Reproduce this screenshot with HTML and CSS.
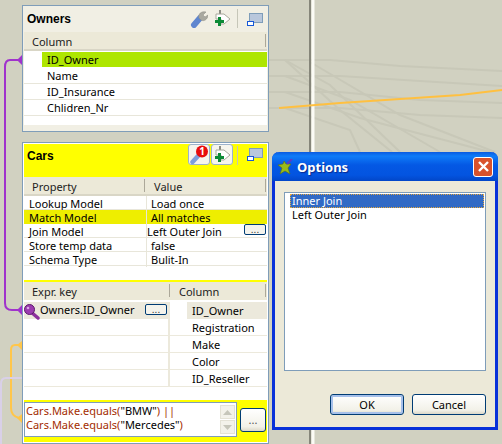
FILE: index.html
```html
<!DOCTYPE html>
<html lang="en">

<head>
    <meta charset="UTF-8" />
    <title>Map Editor</title>
    <link rel="stylesheet" href="styles.css">
</head>

<body>
    <div class="canvas">

        <svg class="links" width="502" height="444" viewBox="0 0 502 444" fill="none">
            <g stroke="#c8c8b8" stroke-width="2">
                <path d="M269 60H330L400 66L502 71" />
                <path d="M269 76H340L420 81L502 86" />
                <path d="M269 92H340L420 100L502 103" />
                <path d="M269 108H340L420 115L502 118" />
                <path d="M285 60L330 85L400 152" />
                <path d="M285 76L350 100L440 152" />
                <path d="M285 60L340 110L392 152" />
                <path d="M285 92L360 118L490 152" />
                <path d="M285 108L350 130L360 152" />
                <path d="M310 62L400 115L495 152" />
            </g>
            <path d="M310 0V152" stroke="#86867a" stroke-width="2" />
            <path d="M313 0V152" stroke="#fbfbf5" stroke-width="3" />
            <path d="M310 430V444" stroke="#86867a" stroke-width="2" />
            <path d="M313 430V444" stroke="#fbfbf5" stroke-width="3" />
            <path d="M279 108L340 103L400 99L460 95L502 90" stroke="#ffc040" stroke-width="2" />
            <path d="M21 345H15Q11 345 11 350V408Q11 416 19 418" stroke="#ffc64a" stroke-width="2" />
            <path d="M22 341V350L17 345Z M22 414V423L17 418Z" fill="#ffc64a" />
            <path d="M22 378H6Q1 378 1 384V444" stroke="#d9d0e8" stroke-width="2" />
            <path d="M20 60H10Q5 60 5 67V303Q5 310 12 310H20" stroke="#a033cc" stroke-width="2" />
            <path d="M22 55V65L17 60Z M22 305V315L17 310Z" fill="#a033cc" />
        </svg>

        <div class="panel panel-owners">
            <div class="panel-title">
                <b>Owners</b>
                <div class="title-tools">
                    <span class="tool">
                        <svg width="18" height="18" viewBox="0 0 18 18">
                            <path d="M4 15L10 8" stroke="#5f86cf" stroke-width="6" stroke-linecap="round" />
                            <path d="M9 8C8 4 11 1 16 2L13 5L15 7L18 5C18 9 14 12 11 10Z" fill="#a9a9a0" stroke="#8a8a82" stroke-width=".5" />
                        </svg>
                    </span>
                    <span class="tool">
                        <svg width="18" height="18" viewBox="0 0 18 18">
                            <path d="M7 0V5" stroke="#8c8c84" stroke-width="2" />
                            <path d="M3 4H11L17 9L11 14H8V9H3Z" fill="#fff" stroke="#a8a89c" />
                            <path d="M5 7H8V10H11V13H8V16H5V13H2V10H5Z" fill="#0c8a36" />
                        </svg>
                    </span>
                    <i class="tool-sep"></i>
                    <span class="tool">
                        <svg width="16" height="15" viewBox="0 0 16 15">
                            <rect x="2.500" y="1.500" width="13" height="9" fill="#b9c7dc" stroke="#7f9db9" />
                            <rect x=".5" y="9.500" width="6" height="4" fill="#fff" stroke="#1658d8" />
                        </svg>
                    </span>
                </div>
            </div>
            <div class="grid-head">
                <span class="head-cell owners-head">Column</span>
            </div>
            <div class="owners-rows">
                <div class="owner-row selected"><span>ID_Owner</span></div>
                <div class="owner-row"><span>Name</span></div>
                <div class="owner-row"><span>ID_Insurance</span></div>
                <div class="owner-row"><span>Chlidren_Nr</span></div>
            </div>
            <div class="owners-foot"></div>
        </div>

        <div class="panel panel-cars">
            <div class="panel-title title-yellow">
                <b>Cars</b>
                <div class="title-tools">
                    <span class="tool boxed">
                        <svg width="20" height="20" viewBox="0 0 20 20">
                            <path d="M3.500 17L9 11" stroke="#7e9fdc" stroke-width="4.500" stroke-linecap="round" />
                            <circle cx="13" cy="6.500" r="6" fill="#e80d0d" />
                            <text x="13" y="10" class="badge-num">1</text>
                        </svg>
                    </span>
                    <span class="tool boxed">
                        <svg width="18" height="18" viewBox="0 0 18 18">
                            <path d="M7 0V5" stroke="#8c8c84" stroke-width="2" />
                            <path d="M3 4H11L17 9L11 14H8V9H3Z" fill="#fff" stroke="#a8a89c" />
                            <path d="M5 7H8V10H11V13H8V16H5V13H2V10H5Z" fill="#0c8a36" />
                        </svg>
                    </span>
                    <i class="tool-sep"></i>
                    <span class="tool">
                        <svg width="16" height="15" viewBox="0 0 16 15">
                            <rect x="2.500" y="1.500" width="13" height="9" fill="#b9c7dc" stroke="#7f9db9" />
                            <rect x=".5" y="9.500" width="6" height="4" fill="#fff" stroke="#1658d8" />
                        </svg>
                    </span>
                </div>
            </div>

            <div class="grid-head props-cols">
                <span class="head-cell">Property</span>
                <span class="head-cell">Value</span>
            </div>
            <div class="props">
                <div class="prop-row"><span>Lookup Model</span><span>Load once</span></div>
                <div class="prop-row selected"><span>Match Model</span><span>All matches</span></div>
                <div class="prop-row join-row"><span>Join Model</span><span>Left Outer Join</span><button class="dots">...</button></div>
                <div class="prop-row"><span>Store temp data</span><span>false</span></div>
                <div class="prop-row"><span>Schema Type</span><span>Bulit-In</span></div>
            </div>
            <div class="yellow-line"></div>

            <div class="grid-head keys-cols">
                <span class="head-cell">Expr. key</span>
                <span class="head-cell">Column</span>
            </div>
            <div class="keys">
                <div class="key-row first">
                    <div class="key-expr">
                        <svg width="16" height="16" viewBox="0 0 16 16">
                            <path d="M7 8L14 14" stroke="#8c2f9c" stroke-width="3.500" stroke-linecap="round" />
                            <circle cx="5.500" cy="5.500" r="5" fill="#9c3cb0" stroke="#5c1a6c" />
                            <circle cx="4" cy="4" r="1.300" fill="#d9a6e4" />
                        </svg>
                        <span>Owners.ID_Owner</span>
                        <button class="dots">...</button>
                    </div>
                    <div class="key-col"><span>ID_Owner</span></div>
                </div>
                <div class="key-row"><div class="key-expr"></div><div class="key-col"><span>Registration</span></div></div>
                <div class="key-row"><div class="key-expr"></div><div class="key-col"><span>Make</span></div></div>
                <div class="key-row"><div class="key-expr"></div><div class="key-col"><span>Color</span></div></div>
                <div class="key-row"><div class="key-expr"></div><div class="key-col"><span>ID_Reseller</span></div></div>
            </div>

            <div class="filter">
                <div class="filter-box">
                    <div class="filter-code">
                        <div><em>Cars.Make.equals(</em>"BMW"<em>) ||</em></div>
                        <div><em>Cars.Make.equals(</em>"Mercedes"<em>)</em></div>
                    </div>
                    <div class="scroll">
                        <span class="scroll-btn">
                            <svg width="9" height="5" viewBox="0 0 9 5"><path d="M0 5L4.500 0L9 5Z" fill="#c6c6ba" /></svg>
                        </span>
                        <span class="scroll-btn">
                            <svg width="9" height="5" viewBox="0 0 9 5"><path d="M0 0L4.500 5L9 0Z" fill="#c6c6ba" /></svg>
                        </span>
                    </div>
                </div>
                <button class="xp-btn filter-btn">...</button>
            </div>
        </div>

        <div class="dialog">
            <div class="dialog-title">
                <svg width="16" height="16" viewBox="0 0 16 16">
                    <path d="M6 2L8 5L13 5L10 9L12 15L7 12L2 15L4 9L0 6L5 5Z" fill="#9aba1a" stroke="#5e7010" stroke-width=".6" />
                    <path d="M9 5L14 0" stroke="#5a3cc8" stroke-width="2" />
                </svg>
                <span class="dialog-name">Options</span>
                <span class="close-btn">
                    <svg width="11" height="11" viewBox="0 0 11 11"><path d="M1 1L10 10M10 1L1 10" stroke="#fff" stroke-width="2.400" /></svg>
                </span>
            </div>
            <div class="dialog-body">
                <div class="option-list">
                    <div class="option active">Inner Join</div>
                    <div class="option">Left Outer Join</div>
                </div>
                <div class="dialog-buttons">
                    <button class="xp-btn dialog-btn default">OK</button>
                    <button class="xp-btn dialog-btn">Cancel</button>
                </div>
            </div>
        </div>

    </div>
</body>

</html>
```

FILE: styles.css
```css
html, body {
    margin: 0;
    padding: 0;
}

body {
    font-family: "Noto Sans", "Liberation Sans", Arial, sans-serif;
    font-size: 11px;
    color: #000;
}

.canvas {
    position: relative;
    width: 502px;
    height: 444px;
    overflow: hidden;
    background: #d1d1c1;
}

.links {
    position: absolute;
    left: 0;
    top: 0;
}

/* panels */

.panel {
    position: absolute;
    left: 22px;
    width: 247px;
    box-sizing: border-box;
    border: 1px solid #7f9db9;
    padding: 1px;
    background: #fff;
    display: flex;
    flex-direction: column;
}

.panel-owners {
    top: 5px;
    height: 127px;
    background: #f1efe4;
}

.panel-cars {
    top: 142px;
    height: 302px;
}

.panel-title {
    height: 25px;
    flex: none;
    display: flex;
    justify-content: space-between;
    background: #f1efe4;
    padding: 0 4px 0 3px;
    box-sizing: border-box;
}

.panel-title b {
    font-family: "Liberation Sans", Arial, sans-serif;
    font-size: 12px;
    margin-top: 5px;
}

.title-yellow {
    height: 33px;
    background: #ffff00;
}

.title-tools {
    display: flex;
    align-items: flex-start;
    height: 22px;
    margin-top: 2px;
}

.title-yellow .title-tools {
    margin-top: 0;
}

.tool {
    display: flex;
    align-items: center;
    justify-content: center;
    height: 20px;
}

.tool + .tool {
    margin-left: 5px;
}

.title-yellow .tool:last-child {
    height: 21px;
}

.tool.boxed {
    width: 22px;
    height: 21px;
    box-sizing: border-box;
    background: #f6f5ee;
    border: 1px solid #9db3cc;
    border-radius: 3px;
}

.tool.boxed + .tool.boxed {
    margin-left: 1px;
}

.tool-sep {
    width: 1px;
    height: 19px;
    margin: 0 9px 0 6px;
    background: #c6c6b8;
}

.title-yellow .tool-sep {
    margin-left: 4px;
    margin-top: 2px;
}

.badge-num {
    font-size: 10px;
    font-weight: bold;
    fill: #fff;
    text-anchor: middle;
}

/* table headers */

.grid-head {
    height: 19px;
    flex: none;
    display: flex;
    box-sizing: border-box;
    background: #ece9d8;
    border-bottom: 2px solid #d9d6c6;
    color: #222;
}

.keys-cols {
    height: 18px;
    border-bottom: 0;
}

.head-cell {
    box-sizing: border-box;
    padding: 0 0 0 8px;
    border-right: 1px solid #aca899;
    height: 13px;
    line-height: 15px;
    margin-top: 2px;
}

.owners-head {
    width: 242px;
}

.props-cols .head-cell:first-child {
    width: 121px;
}

.props-cols .head-cell:last-child {
    width: 121px;
    padding-left: 9px;
}

.keys-cols .head-cell:first-child {
    width: 146px;
}

.keys-cols .head-cell:last-child {
    width: 96px;
    padding-left: 9px;
}

/* owners table */

.owners-rows {
    background: #fff;
    padding-top: 1px;
    height: 74px;
    flex: none;
    box-sizing: border-box;
}

.owner-row {
    height: 16px;
    box-sizing: border-box;
    border-bottom: 1px solid #e8e6da;
    padding-left: 18px;
}

.owner-row span {
    display: block;
    height: 15px;
    line-height: 15px;
    padding-left: 5px;
}

.owner-row.selected {
    border-bottom-color: #fff;
}

.owner-row.selected span {
    background: #aee600;
}

.owners-foot {
    flex: 1;
    background: #f1efe4;
}

/* properties table */

.props {
    height: 84px;
    flex: none;
    background: #fff;
    box-sizing: border-box;
}

.prop-row {
    display: grid;
    grid-template-columns: 122px 1fr;
    position: relative;
    height: 14px;
    box-sizing: border-box;
    line-height: 15px;
    border-bottom: 1px solid #e8e6da;
}

.prop-row span {
    padding-left: 5px;
    white-space: nowrap;
}

.prop-row span:nth-child(2) {
    border-left: 1px solid #e8e6da;
    padding-left: 4px;
}

.prop-row.selected {
    background: #eeee00;
    border-bottom-color: #eeee00;
}

.join-row span:nth-child(2) {
    padding-left: 0;
}

.dots {
    width: 22px;
    height: 11px;
    padding: 0;
    box-sizing: border-box;
    border: 1px solid #003c74;
    border-radius: 2px;
    background: #f4f3ec;
    font: 10px/7px "Liberation Sans", Arial, sans-serif;
    color: #333;
}

.join-row .dots {
    position: absolute;
    right: 1px;
    top: 0;
}

.yellow-line {
    height: 2px;
    flex: none;
    background: #ffff00;
}

/* keys table */

.keys {
    height: 100px;
    flex: none;
    padding-top: 2px;
    box-sizing: border-box;
    background: #fff;
}

.key-row {
    display: grid;
    grid-template-columns: 146px 1fr;
    height: 17px;
    box-sizing: border-box;
    border-bottom: 1px solid #ece9dc;
    line-height: 18px;
}

.key-expr {
    display: flex;
    align-items: center;
    border-right: 2px solid #ece9dc;
    box-sizing: border-box;
}

.key-col span {
    padding-left: 5px;
    display: block;
    height: 16px;
    margin-left: 17px;
}

.key-row.first {
    background: #ece9dc;
}

.key-row.first .key-expr span {
    width: 105px;
    line-height: 16px;
    padding-bottom: 3px;
}

.key-row.first .key-expr .dots {
    margin-bottom: 4px;
}

.key-row.first .key-col {
    background: linear-gradient(to right, #fff 17px, transparent 17px);
}

/* filter */

.filter {
    flex: 1;
    display: flex;
    align-items: flex-start;
    gap: 3px;
    background: #ffff00;
    padding-top: 2px;
}

.filter-box {
    width: 213px;
    height: 35px;
    box-sizing: border-box;
    border: 1px solid #7f9db9;
    background: #fff;
    display: flex;
    justify-content: space-between;
}

.filter-code {
    padding: 1px 0 0 1px;
    line-height: 14px;
    white-space: nowrap;
}

.filter-code em {
    font-style: normal;
    color: #a32c00;
}

.scroll {
    display: flex;
    flex-direction: column;
    gap: 1px;
    padding: 2px 1px 0 0;
}

.scroll-btn {
    width: 15px;
    height: 14px;
    box-sizing: border-box;
    border: 1px solid #e4e2d6;
    background: #f3f2ea;
    display: flex;
    align-items: center;
    justify-content: center;
}

.xp-btn {
    box-sizing: border-box;
    border: 1px solid #003c74;
    border-radius: 3px;
    background: linear-gradient(#ffffff, #f2f1e8 80%, #dcd8c8);
    padding: 0;
    color: #000;
    font-family: "Noto Sans", "Liberation Sans", Arial, sans-serif;
}

.filter-btn {
    width: 26px;
    height: 24px;
    margin-top: 6px;
    font-size: 11px;
    line-height: 14px;
    color: #555;
}

/* options dialog */

.dialog {
    position: absolute;
    left: 272px;
    top: 152px;
    width: 226px;
    height: 278px;
    box-sizing: border-box;
    display: flex;
    flex-direction: column;
    border: 3px solid #0831d9;
    border-top: 0;
    border-radius: 7px 7px 0 0;
    background: #ece9d8;
}

.dialog-title {
    margin: 0 -3px;
    height: 29px;
    flex: none;
    display: flex;
    align-items: center;
    gap: 3px;
    padding: 0 5px 0 6px;
    border-radius: 7px 7px 0 0;
    background: linear-gradient(#0a5ae0, #0f7cf8 14%, #0458e4 45%, #0354e0 80%, #0246c8);
}

.dialog-name {
    flex: 1;
    color: #fff;
    font-size: 13px;
    font-weight: bold;
    text-shadow: 1px 1px 1px #0a2a90;
}

.close-btn {
    width: 20px;
    height: 20px;
    box-sizing: border-box;
    border: 1px solid #fff;
    border-radius: 3px;
    background: #d9522c;
    display: flex;
    align-items: center;
    justify-content: center;
}

.dialog-body {
    flex: 1;
    display: flex;
    flex-direction: column;
    padding: 11px 8px 12px 9px;
    min-height: 0;
}

.option-list {
    flex: 1;
    box-sizing: border-box;
    border: 1px solid #7f9db9;
    background: #fff;
    padding: 1px 0 0 5px;
    margin-right: 1px;
    line-height: 14px;
}

.option {
    padding-left: 2px;
    margin-right: 1px;
    height: 14px;
}

.option.active {
    background: #316ac5;
    color: #fff;
    outline: 1px dotted #e6a83c;
    outline-offset: -1px;
}

.dialog-buttons {
    display: flex;
    justify-content: flex-end;
    gap: 8px;
    margin-top: 23px;
    padding-right: 1px;
}

.dialog-btn {
    width: 74px;
    height: 21px;
    font-size: 11px;
}

.dialog-btn.default {
    box-shadow: inset 0 0 0 2px #a6c0ea;
}
```
